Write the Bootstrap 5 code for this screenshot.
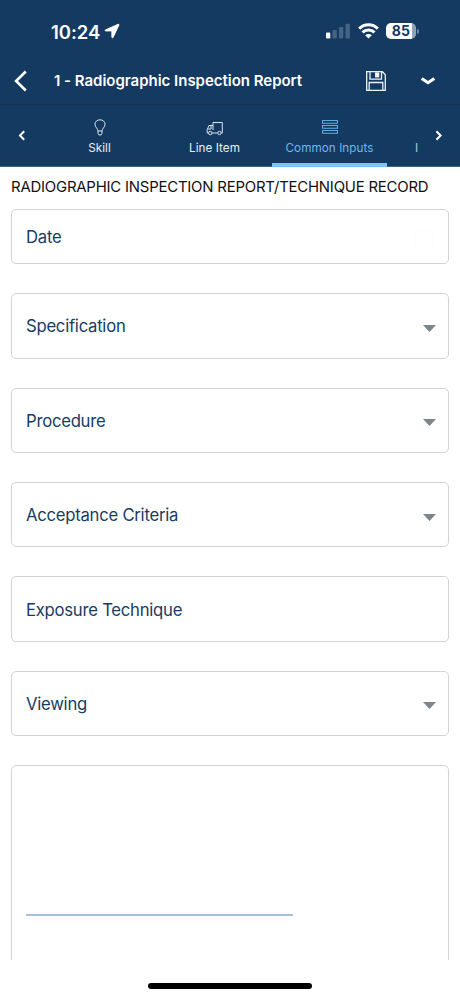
<!DOCTYPE html>
<html lang="en">
<head>
<meta charset="utf-8">
<meta name="viewport" content="width=device-width, initial-scale=1">
<title>Radiographic Inspection Report</title>
<link href="https://cdn.jsdelivr.net/npm/bootstrap@5.3.0/dist/css/bootstrap.min.css" rel="stylesheet">
<style>
  body { font-family: Inter, "Liberation Sans", sans-serif; height: 997px; overflow: hidden; background: #fff; }
  svg { display: block; flex: none; }
  .top-area { background: #143a61; color: #fff; height: 166.5px; }
  .status { height: 62px; padding: 0 41px 0 51px; }
  .clock { font-size: 18.5px; font-weight: 600; letter-spacing: -.05px; line-height: 22px; padding-top: 1px; }
  .wifi, .battery { margin-left: 7px; }
  .battery { width: 30px; height: 16px; border-radius: 5px; font-size: 14px; font-weight: 700; line-height: 16px; color: #143a61;
    background: linear-gradient(90deg, #fff 26px, #8fa3b6 26px); letter-spacing: .2px; }
  .battery-tip { width: 2px; height: 5px; margin-left: 1px; border-radius: 0 2px 2px 0; background: #718aa2; }
  .title-bar { height: 43px; padding: 0 24.5px 5px 14px; border-bottom: 1px solid #123353; }
  .title-text { font-size: 15px; font-weight: 600; line-height: 20px; margin-left: 26px; letter-spacing: -.02px; }
  .more { margin-left: 34px; }
  .tab-strip { height: 61.5px; }
  .arrow-cell { width: 42px; padding-left: 2px; }
  .arrow-cell, .arrow-next { border-bottom: 1px solid #3f6384; }
  .tab-cell { width: 115px; padding-top: 14px; font-size: 11.7px; line-height: 16px; letter-spacing: .06px; color: #e9eef3; border-bottom: 1px solid #3f6384; }
  .tab-cell.active { color: #6eb8ec; border-bottom: 4px solid #7cc3f6; }
  .tab-cell svg { margin-bottom: 3.6px; }
  .tab-clip { width: 31px; padding: 35px 0 0 28px; color: #b3c2d0; }
  .form-area { height: 793.5px; padding: 10px 11px 0; overflow: hidden; }
  .form-heading { font-size: 14.9px; line-height: 20px; margin: 0 0 12.7px; color: #111; letter-spacing: -.2px; }
  .field { height: 65.4px; margin-bottom: 29px; padding: 1px 12px 0 14px; border: 1.3px solid #d2d3d4; border-radius: 5px; color: #163c63; font-size: 16.7px; line-height: 24px; letter-spacing: -.26px; }
  .field.date-field { height: 55px; padding-right: 14px; }
  .field.sign-field { height: 230px; }
  .sign-line { width: 267px; height: 1.5px; margin-top: 147.3px; background: #a9bfe0; }
  .home-bar { width: 164px; height: 6px; border-radius: 3px; background: #000; margin: 22.5px auto 0; }
</style>
</head>
<body>
<header class="top-area">
  <div class="status d-flex align-items-center justify-content-between">
    <div class="d-flex align-items-center">
      <span class="clock">10:24</span>
      <svg class="ms-1" width="16" height="16" viewBox="0 0 16 16" fill="#fff" stroke="#fff" stroke-linejoin="round"><path d="M14.2 1.300 1.500 6.900c-.7.400-.6 1 .2 1h6.200v6.200c0 .9.800 1 1.200.2L14.900 2c.2-.6-.2-.9-.7-.7z"/></svg>
    </div>
    <div class="d-flex align-items-center">
      <svg width="25" height="16" viewBox="0 0 25 16"><rect x="0" y="9.500" width="4.300" height="6" rx="1.200" fill="#fff"/><g fill="#456482"><rect x="6.500" y="7" width="4.300" height="8.500" rx="1.200"/><rect x="13" y="4" width="4.300" height="11.500" rx="1.200"/><rect x="19.500" y=".8" width="4.300" height="14.700" rx="1.200"/></g></svg>
      <svg class="wifi" width="21" height="16" viewBox="0 0 21 16" fill="none" stroke="#fff" stroke-width="2.900"><path d="M1.200 5.600C6.300.5 14.700.5 19.800 5.600M4.500 9.400c3.300-3.300 8.700-3.300 12 0"/><path d="M10.500 15.400 7.200 12.200c1.800-1.700 4.800-1.700 6.600 0z" fill="#fff" stroke="none"/></svg>
      <div class="battery text-center">85</div><span class="battery-tip"></span>
    </div>
  </div>
  <div class="title-bar d-flex align-items-center">
    <svg width="14" height="22" viewBox="0 0 14 22" fill="none" stroke="#fff" stroke-width="2.600"><path d="m11.800 1.500-9.700 9.500 9.700 9.500"/></svg>
    <div class="title-text flex-grow-1 text-nowrap">1 - Radiographic Inspection Report</div>
    <svg width="20" height="20" viewBox="0 0 20 20" fill="none" stroke="#edf2f6" stroke-width="1.300"><path d="M.7.700h15.700l2.900 3v15.600H.7zM4 .7v7.500h11.500V.7M3.200 19.300v-7.800h13.600v7.800"/><rect x="9.700" y="2" width="2.900" height="3.800" fill="#fff"/></svg>
    <svg class="more" width="16" height="10" viewBox="0 0 16 10" fill="none" stroke="#fff" stroke-width="3"><path d="M1.700 2.500 8 6.800l6.300-4.300"/></svg>
  </div>
  <nav class="tab-strip d-flex">
    <div class="arrow-cell d-flex align-items-center justify-content-center"><svg width="8" height="11" viewBox="0 0 8 11" fill="none" stroke="#fff" stroke-width="2"><path d="M6.200 1.300 2 5.500l4.200 4.200"/></svg></div>
    <div class="tab-cell d-flex flex-column align-items-center">
      <svg width="12" height="17" viewBox="0 0 12 17" fill="none" stroke="#dce5ed" stroke-width="1"><path d="M4 12c0-2.500-3-3.500-3-6.800C1 2.600 3.200.8 6 .8s5 1.800 5 4.400c0 3.300-3 4.300-3 6.800zM4 12v2.500L5 16h2l1-1.500V12"/></svg>
      <span>Skill</span>
    </div>
    <div class="tab-cell d-flex flex-column align-items-center">
      <svg width="18" height="17" viewBox="0 0 18 17" fill="none" stroke="#dce5ed" stroke-width="1"><path d="M6.100 14h5.600M15.300 14h1V3.500H7V11M2.500 14H1.200v-3.500L3 6.500h4M2 10h3V6.500"/><circle cx="4.300" cy="14" r="1.700"/><circle cx="13.500" cy="14" r="1.700"/></svg>
      <span>Line Item</span>
    </div>
    <div class="tab-cell active d-flex flex-column align-items-center">
      <svg width="16" height="17" viewBox="0 0 16 17" fill="none" stroke="#5eaee5" stroke-width="1.100"><path d="M.5 1.500h15v2.800H.5zM.5 6.500h15v2.800H.5zM.5 11.500h15v2.800H.5z"/></svg>
      <span>Common Inputs</span>
    </div>
    <div class="tab-cell tab-clip overflow-hidden">I</div>
    <div class="arrow-next d-flex align-items-center justify-content-center flex-grow-1"><svg width="8" height="11" viewBox="0 0 8 11" fill="none" stroke="#fff" stroke-width="2"><path d="M1.400 1.300 5.600 5.500 1.400 9.700"/></svg></div>
  </nav>
</header>
<main class="form-area">
  <h1 class="form-heading fw-normal text-nowrap">RADIOGRAPHIC INSPECTION REPORT/TECHNIQUE RECORD</h1>
  <div class="field date-field d-flex align-items-center justify-content-between"><span>Date</span>
    <svg width="20" height="18" viewBox="0 0 20 18" fill="none" stroke="#fcfcfc"><path d="M1 2h18v15H1zM1 6h18M5 0v3M15 0v3"/></svg></div>
  <div class="field d-flex align-items-center justify-content-between"><span>Specification</span><svg class="mt-1" width="13" height="7" viewBox="0 0 13 7" fill="#7d868c"><path d="M0 0h13L6.500 7z"/></svg></div>
  <div class="field d-flex align-items-center justify-content-between"><span>Procedure</span><svg class="mt-1" width="13" height="7" viewBox="0 0 13 7" fill="#7d868c"><path d="M0 0h13L6.500 7z"/></svg></div>
  <div class="field d-flex align-items-center justify-content-between"><span>Acceptance Criteria</span><svg class="mt-1" width="13" height="7" viewBox="0 0 13 7" fill="#7d868c"><path d="M0 0h13L6.500 7z"/></svg></div>
  <div class="field d-flex align-items-center"><span>Exposure Technique</span></div>
  <div class="field d-flex align-items-center justify-content-between"><span>Viewing</span><svg class="mt-1" width="13" height="7" viewBox="0 0 13 7" fill="#7d868c"><path d="M0 0h13L6.500 7z"/></svg></div>
  <div class="field sign-field"><div class="sign-line"></div></div>
</main>
<div class="home-bar"></div>
<script src="https://cdn.jsdelivr.net/npm/bootstrap@5.3.0/dist/js/bootstrap.bundle.min.js"></script>
</body>
</html>
